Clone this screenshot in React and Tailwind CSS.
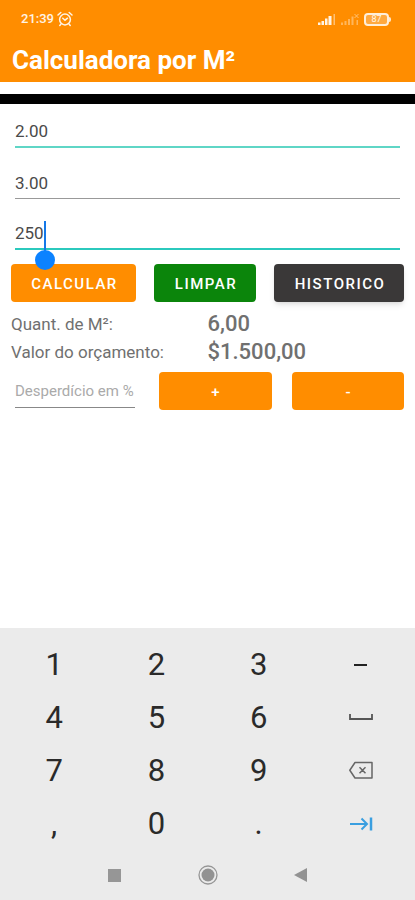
import React from "react";

function StatusBar() {
  return (
    <div className="flex h-[38px] items-center justify-between pl-[21px] pr-6 text-white/90">
      <div className="flex items-center gap-[3px]">
        <span className="text-[13px] font-medium leading-4">21:39</span>
        <svg className="h-4 w-4" viewBox="0 0 16 16" fill="none" stroke="currentColor" strokeWidth="1.5" strokeLinecap="round" aria-hidden="true">
          <circle cx="8" cy="8.5" r="5.4" />
          <path d="M1 4 3.8 1.5M15 4l-2.800-2.500M5.800 7.200 8 9.200l2.500-2M3.800 13.200l-1 1.200M12.200 13.200l1 1.200" />
        </svg>
      </div>
      <div className="flex items-center gap-[5px]">
        <svg className="h-3 w-[18px]" viewBox="0 0 18 12" fill="currentColor" aria-hidden="true">
          <path d="M0 9.500h2.500V12H0zM3.500 8h2.500v4h-2.500zM7 5.500h2.500V12H7zM10.500 3h3V12h-3z" />
          <path d="M15.500 1h1.500v11h-1.500z" opacity="0.5" />
        </svg>
        <svg className="h-3 w-[18px]" viewBox="0 0 18 12" fill="currentColor" aria-hidden="true">
          <path d="M0 9.500h2V12H0zM3.500 8h2v4h-2zM7 6h2v6H7zM10.500 3.500h2V12h-2zM15.500 7h1.500v5h-1.500z" opacity="0.4" />
          <path d="m13.500 1 4 4M17.500 1l-4 4" stroke="currentColor" opacity="0.5" />
        </svg>
        <div className="flex items-center">
          <span className="flex h-[13px] w-[25px] items-center justify-center rounded-[4px] border-2 border-white/80 bg-white/25 text-[9px] leading-[9px]">87</span>
          <span className="h-[5px] w-[2px] rounded-r bg-white/80" />
        </div>
      </div>
    </div>
  );
}

function Field({ label, value, line, children }) {
  return (
    <div className="relative h-[51px]">
      <input
        aria-label={label}
        defaultValue={value}
        inputMode="decimal"
        className={`block h-11 w-full bg-transparent pt-3 text-[17px] text-[#4a4a4a] outline-none ${line}`}
      />
      {children}
    </div>
  );
}

function Action({ className, children }) {
  return (
    <button type="button" className={`h-[38px] rounded-[4px] pl-[2px] pt-[2px] text-[15px] font-medium tracking-widest text-white ${className}`}>
      {children}
    </button>
  );
}

function Key({ label, children }) {
  return (
    <button type="button" aria-label={label} className="flex h-[53px] items-center justify-center text-[31px] leading-none text-[#2a2a2a]">
      {children}
    </button>
  );
}

function Keyboard() {
  return (
    <div className="grid grid-cols-4 px-[3px] pt-[10px]">
      <Key>1</Key>
      <Key>2</Key>
      <Key>3</Key>
      <Key label="menos"><span className="h-[2px] w-[13px] bg-[#222]" /></Key>
      <Key>4</Key>
      <Key>5</Key>
      <Key>6</Key>
      <Key label="espaço">
        <svg className="h-6 w-6" viewBox="0 0 24 24" fill="none" stroke="#555" strokeWidth="1.800" aria-hidden="true">
          <path d="M1 8v5h22V8" />
        </svg>
      </Key>
      <Key>7</Key>
      <Key>8</Key>
      <Key>9</Key>
      <Key label="apagar">
        <svg className="h-6 w-6" viewBox="0 0 24 24" fill="none" stroke="#666" strokeWidth="1.500" strokeLinejoin="round" aria-hidden="true">
          <path d="M6 3.500h17v15.500H6L.800 11.250zM10.500 8.250l6 6M16.500 8.250l-6 6" />
        </svg>
      </Key>
      <Key>,</Key>
      <Key>0</Key>
      <Key>.</Key>
      <Key label="próximo">
        <svg className="h-6 w-6" viewBox="0 0 24 24" fill="none" stroke="#3a9fe0" strokeWidth="2" aria-hidden="true">
          <path d="M1 12h17M12.500 6.500 18 12l-5.500 5.500" />
          <path d="M22 5.500v13" strokeWidth="2.500" />
        </svg>
      </Key>
    </div>
  );
}

function NavBar() {
  return (
    <nav className="flex h-[50px] items-center justify-center gap-[69px]" aria-label="Sistema">
      <button type="button" aria-label="Recentes" className="flex w-6 justify-center">
        <span className="h-[13px] w-[13px] bg-[#969696]" />
      </button>
      <button type="button" aria-label="Início" className="flex w-6 justify-center">
        <svg className="h-5 w-5" viewBox="0 0 20 20" aria-hidden="true">
          <circle cx="10" cy="10" r="9" fill="none" stroke="#969696" strokeWidth="1.300" />
          <circle cx="10" cy="10" r="6.500" fill="#929292" />
        </svg>
      </button>
      <button type="button" aria-label="Voltar" className="flex w-6 justify-center">
        <svg className="h-[14px] w-[13px]" viewBox="0 0 13 14" fill="#929292" aria-hidden="true">
          <path d="M13 0v14L0 7z" />
        </svg>
      </button>
    </nav>
  );
}

export default function App() {
  return (
    <div className="flex min-h-screen flex-col bg-white font-[Roboto,sans-serif]">
      <header className="h-[82px] bg-[#ff8d00]">
        <StatusBar />
        <h1 className="px-3 pt-[6px] text-[26px] font-bold leading-8 text-white">Calculadora por M²</h1>
      </header>
      <div className="mt-3 h-[10px] bg-black" />

      <main className="flex-1 pl-[11px] pr-[11px]">
        <div className="px-1">
          <Field label="Largura" value="2.00" line="border-b-2 border-[#5fd6c6]" />
          <Field label="Comprimento" value="3.00" line="border-b border-[#999]" />
          <Field label="Preço" value="250" line="border-b-2 border-[#2bc9bd]">
            <span className="absolute left-[29px] top-[15px] h-[30px] w-[2px] bg-[#1478e8]" />
            <span className="absolute left-5 top-11 h-5 w-5 rounded-full bg-[#0c82ff]" />
          </Field>
        </div>

        <div className="mt-[7px] flex justify-between">
          <Action className="w-[125px] bg-[#ff8d00]">CALCULAR</Action>
          <Action className="w-[102px] bg-[#0b850b]">LIMPAR</Action>
          <Action className="w-[130px] bg-[#3a3838] shadow-md">HISTORICO</Action>
        </div>

        <dl className="mt-2 grid grid-cols-2 text-[#707070]">
          <dt className="text-[17px] leading-7">Quant. de M²:</dt>
          <dd className="text-[22px] font-medium leading-7">6,00</dd>
          <dt className="text-[17px] leading-7">Valor do orçamento:</dt>
          <dd className="text-[22px] font-medium leading-7">$1.500,00</dd>
        </dl>

        <div className="mt-[6px] flex">
          <div className="w-[148px] pl-1 pr-6">
            <input
              aria-label="Desperdício em %"
              placeholder="Desperdício em %"
              className="block h-9 w-full border-b border-[#888] bg-transparent pt-[2px] text-[15px] outline-none placeholder:text-[#aaa]"
            />
          </div>
          <div className="grid flex-1 grid-cols-2 gap-5">
            <Action className="bg-[#ff8d00]">+</Action>
            <Action className="bg-[#ff8d00]">-</Action>
          </div>
        </div>
      </main>

      <footer className="bg-[#ebebeb]">
        <Keyboard />
        <NavBar />
      </footer>
    </div>
  );
}
